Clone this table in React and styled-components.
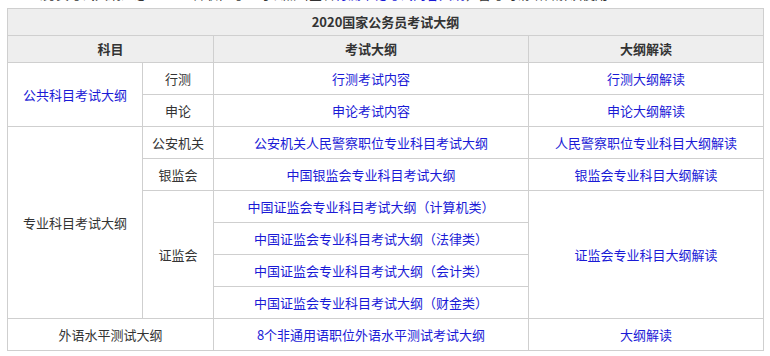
import React from 'react';
import styled, { createGlobalStyle } from 'styled-components';

const GlobalStyle = createGlobalStyle`
    body {
        margin: 0;
        background: #fff;
        font-family: "Noto Sans CJK SC", "Microsoft YaHei", sans-serif;
        font-size: 13px;
        color: #333;
    }
`;

const Page = styled.div`
    padding: 0 8px 0 7px;
`;

const CutLine = styled.div`
    height: 8px;
    overflow: hidden;
    padding-left: 23px;
`;

const CutText = styled.p`
    margin: -14px 0 0;
    line-height: 16px;
    font-size: 13px;
    white-space: nowrap;
    color: #333;
`;

const CutPart = styled.span`
    margin-left: ${p => p.$gap || 0}px;
`;

const CutLink = styled.span`
    color: #1a1ad6;
`;

const Table = styled.table`
    width: 756px;
    border-collapse: collapse;
    table-layout: fixed;
`;

const Cell = styled.td`
    border: 1px solid #cfcfcf;
    text-align: center;
    vertical-align: middle;
    height: ${p => p.$h || 31}px;
    padding: 0;
    background: ${p => (p.$head ? '#eeeeee' : '#fff')};
    font-weight: ${p => (p.$bold ? 700 : 400)};
    color: ${p => (p.$link ? '#1a1ad6' : '#333')};
    line-height: 16px;
`;

const rows = [
    '中国证监会专业科目考试大纲（计算机类）',
    '中国证监会专业科目考试大纲（法律类）',
    '中国证监会专业科目考试大纲（会计类）',
    '中国证监会专业科目考试大纲（财金类）',
];

export default function App() {
    return (
        <Page>
            <GlobalStyle />
            <CutLine>
                <CutText>
                    公务员考试大纲汇总：
                    <CutPart $gap={32}>各职位考生可以点击查看</CutPart>
                    <CutLink>行测申论考试内容大纲</CutLink>
                    ，备考时请结合解读使用
                </CutText>
            </CutLine>
            <Table>
                <colgroup>
                    <col style={{ width: 135 }} />
                    <col style={{ width: 71 }} />
                    <col style={{ width: 315 }} />
                    <col style={{ width: 235 }} />
                </colgroup>
                <tbody>
                    <tr>
                        <Cell colSpan={4} $head $bold $h={26}>2020国家公务员考试大纲</Cell>
                    </tr>
                    <tr>
                        <Cell colSpan={2} $head $bold $h={26}>科目</Cell>
                        <Cell $head $bold $h={26}>考试大纲</Cell>
                        <Cell $head $bold $h={26}>大纲解读</Cell>
                    </tr>
                    <tr>
                        <Cell rowSpan={2} $link>公共科目考试大纲</Cell>
                        <Cell>行测</Cell>
                        <Cell $link>行测考试内容</Cell>
                        <Cell $link>行测大纲解读</Cell>
                    </tr>
                    <tr>
                        <Cell>申论</Cell>
                        <Cell $link>申论考试内容</Cell>
                        <Cell $link>申论大纲解读</Cell>
                    </tr>
                    <tr>
                        <Cell rowSpan={6}>专业科目考试大纲</Cell>
                        <Cell>公安机关</Cell>
                        <Cell $link>公安机关人民警察职位专业科目考试大纲</Cell>
                        <Cell $link>人民警察职位专业科目大纲解读</Cell>
                    </tr>
                    <tr>
                        <Cell>银监会</Cell>
                        <Cell $link>中国银监会专业科目考试大纲</Cell>
                        <Cell $link>银监会专业科目大纲解读</Cell>
                    </tr>
                    {rows.map((name, i) => (
                        <tr key={name}>
                            {i === 0 && <Cell rowSpan={4}>证监会</Cell>}
                            <Cell $link>{name}</Cell>
                            {i === 0 && <Cell rowSpan={4} $link>证监会专业科目大纲解读</Cell>}
                        </tr>
                    ))}
                    <tr>
                        <Cell colSpan={2}>外语水平测试大纲</Cell>
                        <Cell $link>8个非通用语职位外语水平测试考试大纲</Cell>
                        <Cell $link>大纲解读</Cell>
                    </tr>
                </tbody>
            </Table>
        </Page>
    );
}
